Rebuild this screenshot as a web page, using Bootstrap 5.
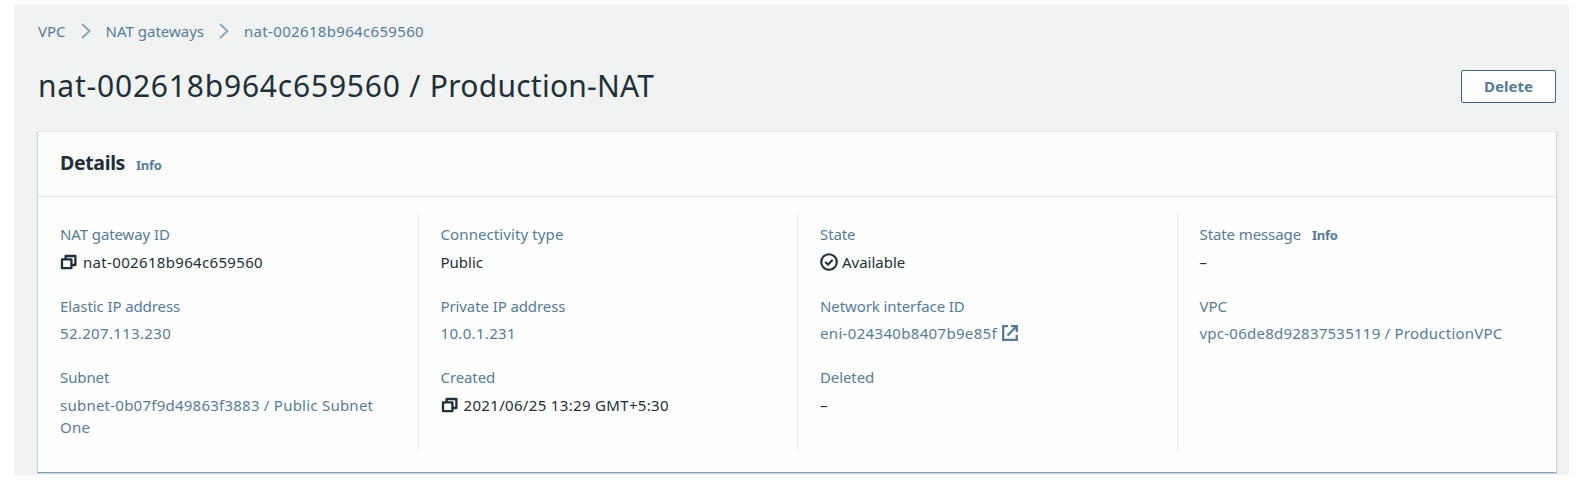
<!DOCTYPE html>
<html lang="en">
<head>
<meta charset="utf-8">
<meta name="viewport" content="width=device-width, initial-scale=1">
<title>NAT gateway details</title>
<link rel="stylesheet" href="https://cdn.jsdelivr.net/npm/bootstrap@5.3.0/dist/css/bootstrap.min.css">
<style>
body{height:480px;overflow:hidden;background:#fff;color:#222f36;font-family:"Noto Sans",sans-serif;font-size:15px;line-height:22px}
a,.term{color:#557c99;text-decoration:none}
svg{display:block;flex:none}
.console{margin:5px 14px;height:470px;padding:0 12px 0 23px;background:#f1f3f3;overflow:hidden}
.crumbs{height:53px;padding:0 1px 2px}
.crumbs .breadcrumb-item{padding:0;display:flex}
.crumbs .breadcrumb-item::before{display:none}
.crumbs .chevron{margin:1px 15px 0}
.page-title{font-size:30px;line-height:40px;font-weight:400;padding:0 0 0 1px;letter-spacing:.25px;white-space:nowrap}
.page-title .title-id{letter-spacing:.79px}
.heading{height:55px;padding:1px 1px 0 0}
.btn-delete{width:95px;height:33px;padding:0;border:1px solid #3f6580;border-radius:2px;background:#fff;color:#557c99;font-size:15px;font-weight:700;line-height:22px}
.panel{height:342px;margin-top:18px;border:1px solid #c7d3da;border-top-color:#e6eaed;border-bottom:1px solid #7f9fb3;border-radius:0;background:#fefefe;box-shadow:0 1px 1px #cfdbe2;color:inherit}
.panel .card-header{height:65px;padding:0 22px 3px;background:#fbfbfb;border-bottom:1px solid #e1e6ea;border-radius:0}
.panel h2{font-size:19.5px;line-height:26px;font-weight:700;letter-spacing:-.35px}
.info{font-size:13px;font-weight:700;letter-spacing:-.3px;line-height:1;margin-left:11px}
.panel .card-body{padding:16px 0 20px}
.cell{padding:10px 22px 0;border-left:1px solid #e6e9eb;height:238px}
.cell:first-child{border-left-color:transparent;padding-left:21px}
.cell dt{font-weight:400;height:22px;letter-spacing:-.1px}
.cell dt.wide{letter-spacing:.1px}
.cell dd{margin:6px 0 22px}
.cell dd.second{margin-top:5px}
.cell dd,.cell dt{white-space:nowrap}
.ident{letter-spacing:.33px}
.mixed{letter-spacing:.24px}
.copied{margin-left:6px}
.external{margin-left:5px}
</style>
</head>
<body>
<main class="console">
  <nav class="crumbs d-flex align-items-center" aria-label="breadcrumb">
    <ol class="breadcrumb mb-0 align-items-center">
      <li class="breadcrumb-item"><a href="#">VPC</a></li>
      <li class="breadcrumb-item chevron"><svg width="10" height="16" viewBox="0 0 10 16" fill="none" stroke="#8da5b5" stroke-width="1.9"><path d="M1 1l7.5 7L1 15"/></svg></li>
      <li class="breadcrumb-item"><a href="#">NAT gateways</a></li>
      <li class="breadcrumb-item chevron"><svg width="10" height="16" viewBox="0 0 10 16" fill="none" stroke="#8da5b5" stroke-width="1.9"><path d="M1 1l7.5 7L1 15"/></svg></li>
      <li class="breadcrumb-item"><a class="ident" href="#">nat-002618b964c659560</a></li>
    </ol>
  </nav>
  <header class="heading d-flex align-items-center justify-content-between">
    <h1 class="page-title mb-0"><span class="title-id">nat-002618b964c659560 / </span>Production-NAT</h1>
    <button class="btn btn-delete" type="button">Delete</button>
  </header>
  <section class="card panel">
    <div class="card-header d-flex align-items-center">
      <div class="d-flex align-items-baseline"><h2 class="mb-0">Details</h2><a class="info" href="#">Info</a></div>
    </div>
    <div class="card-body">
      <div class="row g-0">
        <dl class="col-3 cell mb-0">
          <dt class="term">NAT gateway ID</dt>
          <dd class="d-flex align-items-center"><svg width="17" height="16" viewBox="0 0 17 16" fill="none" stroke="#222f36" stroke-width="2.3" stroke-linejoin="round"><path d="M2 5.4h9.4v8.8H2zM5.6 4.6V2h9.8v9H12"/></svg><span class="ident copied">nat-002618b964c659560</span></dd>
          <dt class="term">Elastic IP address</dt>
          <dd class="second"><a class="ident" href="#">52.207.113.230</a></dd>
          <dt class="term">Subnet</dt>
          <dd><a class="mixed" href="#">subnet-0b07f9d49863f3883 / Public Subnet<br>One</a></dd>
        </dl>
        <dl class="col-3 cell mb-0">
          <dt class="term wide">Connectivity type</dt>
          <dd>Public</dd>
          <dt class="term">Private IP address</dt>
          <dd class="second"><a class="ident" href="#">10.0.1.231</a></dd>
          <dt class="term">Created</dt>
          <dd class="d-flex align-items-center"><svg width="17" height="16" viewBox="0 0 17 16" fill="none" stroke="#222f36" stroke-width="2.3" stroke-linejoin="round"><path d="M2 5.4h9.4v8.8H2zM5.6 4.6V2h9.8v9H12"/></svg><span class="ident copied">2021/06/25 13:29 GMT+5:30</span></dd>
        </dl>
        <dl class="col-3 cell mb-0">
          <dt class="term">State</dt>
          <dd class="d-flex align-items-center"><svg width="18" height="18" viewBox="0 0 18 18" fill="none" stroke="#222f36" stroke-width="2.1"><circle cx="9" cy="9" r="7.8"/><path d="M5.2 9l2.9 2.6 4.6-4.8"/></svg><span class="ms-1">Available</span></dd>
          <dt class="term">Network interface ID</dt>
          <dd class="second d-flex align-items-center"><a class="ident" href="#">eni-024340b8407b9e85f</a><svg class="external" width="16" height="16" viewBox="0 0 16 16" fill="none" stroke="#557c99" stroke-width="2.3"><path d="M6 1.2H1.2v13.6h13.6V10M9 1.2h5.8V7M14.8 1.2L5.5 10.5"/></svg></dd>
          <dt class="term">Deleted</dt>
          <dd>–</dd>
        </dl>
        <dl class="col-3 cell mb-0">
          <dt class="term">State message<a class="info" href="#">Info</a></dt>
          <dd>–</dd>
          <dt class="term">VPC</dt>
          <dd class="second"><a class="mixed" href="#">vpc-06de8d92837535119 / ProductionVPC</a></dd>
        </dl>
      </div>
    </div>
  </section>
</main>
<script src="https://cdn.jsdelivr.net/npm/bootstrap@5.3.0/dist/js/bootstrap.bundle.min.js"></script>
</body>
</html>
